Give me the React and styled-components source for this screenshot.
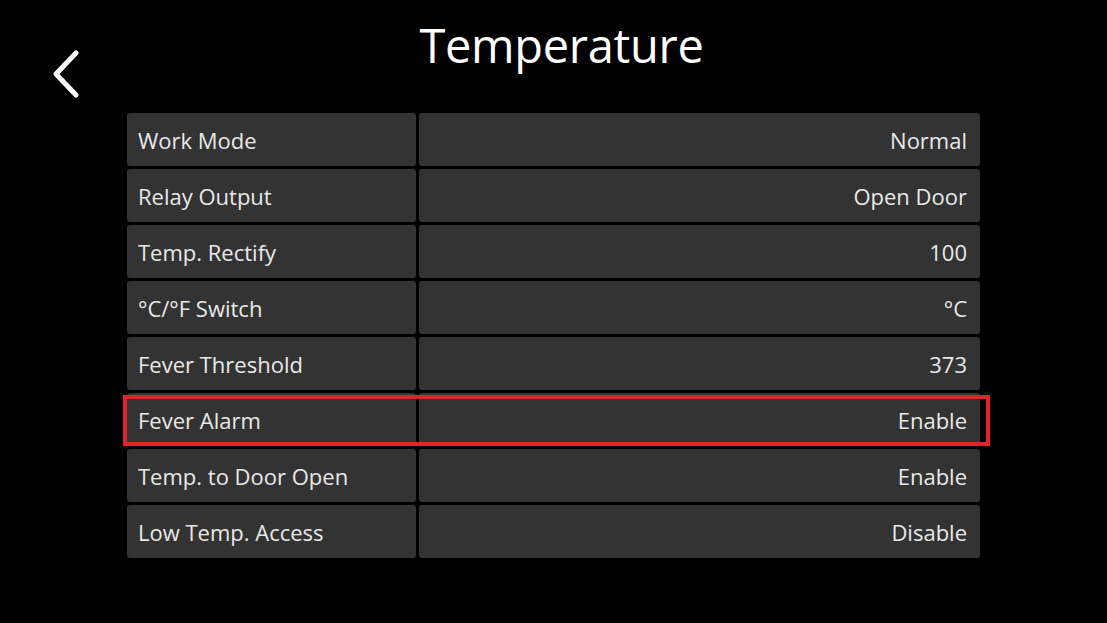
import React from 'react'
import styled, { createGlobalStyle } from 'styled-components'

const GlobalStyle = createGlobalStyle`
    html, body {
        margin: 0;
        padding: 0;
        background: #000;
    }
    body {
        font-family: "Open Sans", "Noto Sans", "DejaVu Sans", sans-serif;
        color: #ececec;
    }
`

const Screen = styled.div`
    width: 1107px;
    height: 623px;
    background: #000;
    overflow: hidden;
`

const Header = styled.div`
    display: grid;
    grid-template-columns: 1fr auto 1fr;
    align-items: start;
    height: 113px;
`

const BackButton = styled.button`
    justify-self: start;
    margin: 50px 0 0 52px;
    padding: 0;
    width: 30px;
    height: 48px;
    background: none;
    border: none;
    cursor: pointer;
`

const Title = styled.h1`
    margin: 13px 0 0 16px;
    font-size: 47px;
    font-weight: 400;
    line-height: 64px;
    color: #fff;
    letter-spacing: -0.3px;
`

const Table = styled.div`
    width: 853px;
    margin: 0 auto;
    display: flex;
    flex-direction: column;
    gap: 3px;
`

const Row = styled.div`
    position: relative;
    display: grid;
    grid-template-columns: 289px 1fr;
    gap: 3px;
    height: 53px;
`

const Cell = styled.div`
    display: flex;
    align-items: center;
    justify-content: ${p => (p.$value ? 'flex-end' : 'flex-start')};
    padding: ${p => (p.$value ? '0 13px 0 0' : '0 0 0 11px')};
    background: #333;
    border-radius: 3px;
    font-size: 22px;
    color: #e9e9e9;
    white-space: nowrap;
`

const Highlight = styled.div`
    position: absolute;
    top: 2px;
    bottom: 0;
    left: -4px;
    right: -10px;
    border: 4px solid #e4222b;
    pointer-events: none;
`

const rows = [
    ['Work Mode', 'Normal'],
    ['Relay Output', 'Open Door'],
    ['Temp. Rectify', '100'],
    ['°C/°F Switch', '°C'],
    ['Fever Threshold', '373'],
    ['Fever Alarm', 'Enable', true],
    ['Temp. to Door Open', 'Enable'],
    ['Low Temp. Access', 'Disable'],
]

export default function App() {
    return (
        <Screen>
            <GlobalStyle />
            <Header>
                <BackButton aria-label="Back">
                    <svg width="30" height="48" viewBox="0 0 30 48">
                        <path
                            d="M24 3 L4 24 L24 45"
                            fill="none"
                            stroke="#fff"
                            strokeWidth="5"
                            strokeLinecap="round"
                            strokeLinejoin="round"
                        />
                    </svg>
                </BackButton>
                <Title>Temperature</Title>
                <div />
            </Header>
            <Table>
                {rows.map(([label, value, active]) => (
                    <Row key={label}>
                        <Cell>{label}</Cell>
                        <Cell $value>{value}</Cell>
                        {active && <Highlight />}
                    </Row>
                ))}
            </Table>
        </Screen>
    )
}
